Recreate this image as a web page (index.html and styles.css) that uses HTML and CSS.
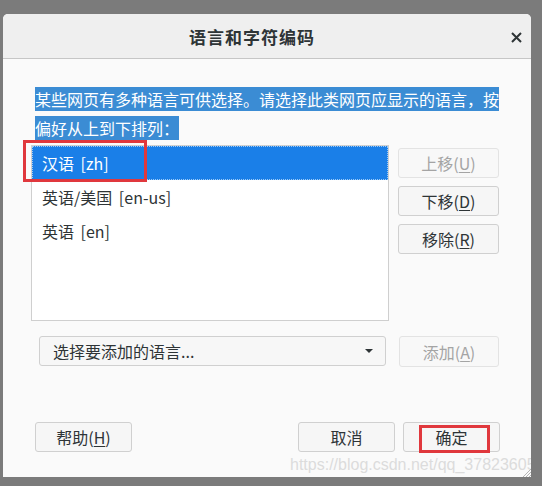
FILE: index.html
```html
<!DOCTYPE html>
<html lang="zh-CN">
<head>
<meta charset="utf-8">
<title>语言和字符编码</title>
<link rel="stylesheet" href="styles.css">
</head>
<body>
<div class="dialog">
  <div class="header">
    <div class="title">语言和字符编码</div>
    <div class="close">
      <svg width="11" height="11" viewBox="0 0 11 11"><path d="M1 1 L10 10 M10 1 L1 10" stroke="#2e3436" stroke-width="2" stroke-linecap="butt"/></svg>
    </div>
  </div>
  <div class="content">
    <p class="desc"><span class="sel">某些网页有多种语言可供选择。请选择此类网页应显示的语言，按偏好从上到下排列：</span></p>
    <div class="langrow">
      <div class="listbox">
        <div class="row selected">汉语 [zh]</div>
        <div class="row">英语/美国 [en-us]</div>
        <div class="row">英语 [en]</div>
      </div>
      <div class="side">
        <button class="btn disabled">上移(<u>U</u>)</button>
        <button class="btn">下移(<u>D</u>)</button>
        <button class="btn">移除(<u>R</u>)</button>
      </div>
    </div>
    <div class="addrow">
      <div class="combo"><span>选择要添加的语言...</span><span class="arrow"></span></div>
      <button class="btn disabled add">添加(<u>A</u>)</button>
    </div>
    <div class="footer">
      <button class="btn fbtn">帮助(<u>H</u>)</button>
      <div class="fill"></div>
      <button class="btn fbtn">取消</button>
      <button class="btn fbtn">确定</button>
    </div>
  </div>
  <div class="mark mark1"></div>
  <div class="mark mark2"></div>
  <div class="watermark">https://blog.csdn.net/qq_37823605</div>
  <svg class="grip" width="10" height="10" viewBox="0 0 10 10"><path d="M10 2 L2 10 M10 5 L5 10 M10 8 L8 10" stroke="#b5b5b5" stroke-width="1"/></svg>
</div>
</body>
</html>
```

FILE: styles.css
```css
html, body {
  margin: 0;
  padding: 0;
}
body {
  background: #7b7b7b;
  font-family: "Noto Sans CJK SC", "Noto Sans", sans-serif;
  color: #2e3436;
  width: 542px;
  height: 486px;
  overflow: hidden;
}
.dialog {
  position: relative;
  margin: 14px 0 0 3px;
  width: 528px;
  height: 463px;
  background: #fafafa;
  border-radius: 5px 5px 0 0;
  overflow: hidden;
  display: flex;
  flex-direction: column;
}
.header {
  height: 44px;
  flex: none;
  background: #efefef;
  border-bottom: 1px solid #c6c6c6;
  display: flex;
  align-items: center;
}
.title {
  flex: 1;
  text-align: center;
  font-size: 17px;
  font-weight: bold;
  letter-spacing: 1px;
  color: #2e3436;
  padding-top: 1px;
}
.close {
  width: 30px;
  height: 44px;
  display: flex;
  align-items: center;
  justify-content: center;
  padding-top: 2px;
  box-sizing: border-box;
}
.content {
  flex: 1;
  display: flex;
  flex-direction: column;
  padding: 26px 32px 25px 28px;
}
.desc {
  margin: 0 0 0 4px;
  width: 470px;
  font-size: 16px;
  line-height: 29px;
}
.sel {
  background: #3b8cd4;
  color: #ffffff;
}
.langrow {
  display: flex;
  margin-top: 2px;
}
.listbox {
  width: 356px;
  height: 174px;
  border: 1px solid #cfcfcf;
  background: #ffffff;
}
.row {
  height: 34px;
  line-height: 34px;
  padding-left: 10px;
  font-size: 16px;
  color: #2e3436;
  white-space: pre;
  word-spacing: 3px;
}
.row.selected {
  background: #1a7fe8;
  color: #ffffff;
  outline: 1px dotted #9ccaf7;
  outline-offset: -1px;
}
.side {
  display: flex;
  flex-direction: column;
  gap: 8px;
  margin-left: 9px;
  margin-top: 3px;
}
.btn {
  font-family: "Noto Sans CJK SC", "Noto Sans", sans-serif;
  font-size: 16px;
  color: #2e3436;
  background: #f6f6f6;
  border: 1px solid #d0d0d0;
  border-radius: 3px;
  height: 30px;
  width: 101px;
  padding: 0;
  display: flex;
  align-items: center;
  justify-content: center;
}
.btn u {
  text-underline-offset: 2px;
}
.btn.disabled {
  color: #a4a4a4;
  background: #f8f8f8;
  border-color: #e3e3e3;
}
.addrow {
  display: flex;
  margin-top: 15px;
  margin-left: 8px;
}
.combo {
  width: 347px;
  height: 30px;
  box-sizing: border-box;
  border: 1px solid #d0d0d0;
  border-radius: 3px;
  background: #f7f7f7;
  display: flex;
  align-items: center;
  justify-content: space-between;
  padding: 0 12px 0 13px;
  font-size: 16px;
}
.arrow {
  width: 0;
  height: 0;
  border-left: 4px solid transparent;
  border-right: 4px solid transparent;
  border-top: 4px solid #2e3436;
}
.add {
  margin-left: 13px;
  width: 100px;
  height: 31px;
}
.footer {
  margin-top: auto;
  display: flex;
  gap: 8px;
  padding-left: 4px;
  margin-right: -1px;
}
.fill {
  flex: 1;
}
.fbtn {
  width: 97px;
}
.mark {
  position: absolute;
  border: 3px solid #e0383d;
  box-sizing: border-box;
}
.mark1 {
  left: 20px;
  top: 126px;
  width: 124px;
  height: 42px;
}
.mark2 {
  left: 416px;
  top: 411px;
  width: 71px;
  height: 28px;
}
.watermark {
  position: absolute;
  left: 287px;
  top: 442px;
  font-family: "Liberation Sans", Arial, sans-serif;
  font-size: 16px;
  color: #dcdcdc;
  white-space: nowrap;
}
.grip {
  position: absolute;
  right: 0;
  bottom: 0;
}
```
